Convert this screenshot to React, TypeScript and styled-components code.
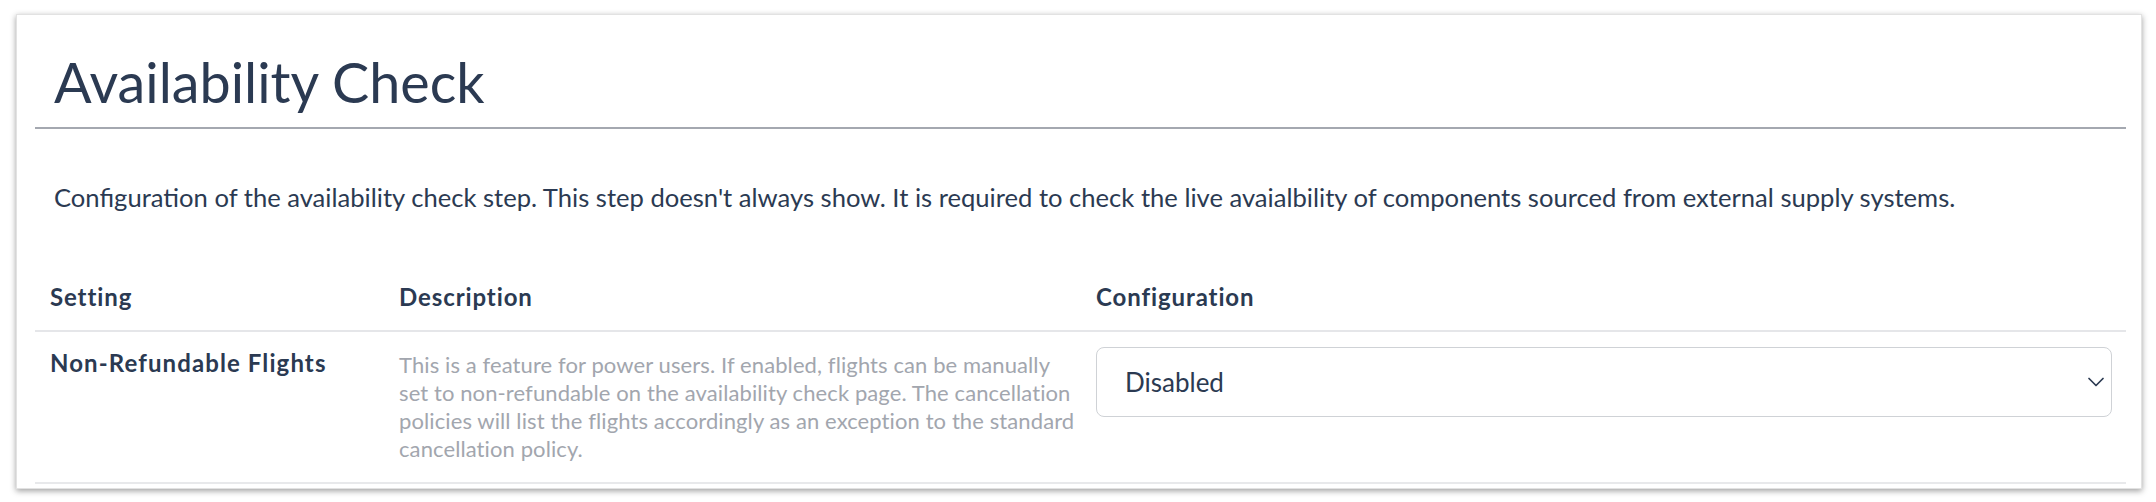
import React from "react";
import styled, { createGlobalStyle } from "styled-components";
import { ChevronDown } from "lucide-react";

const GlobalStyle = createGlobalStyle`
  *, *::before, *::after {
    box-sizing: border-box;
  }

  body {
    margin: 0;
    background: #fff;
    font-family: Lato, "Noto Sans", sans-serif;
    color: #2b3a52;
  }
`;

const Page = styled.div`
  padding: 14px 14px 14px 16px;
`;

const Card = styled.section`
  background: #fff;
  border: 1px solid #e2e2e2;
  box-shadow: 0 2px 6px rgba(0, 0, 0, 0.38);
  padding: 34px 15px 4px 18px;
`;

const Title = styled.h1`
  margin: 0;
  padding: 0 0 13px 19px;
  font-size: 55.7px;
  line-height: 65px;
  font-weight: 400;
  color: #2b3a52;
  border-bottom: 2px solid #a4a8b0;
`;

const Intro = styled.p`
  margin: 53px 0 59px;
  padding-left: 19px;
  font-size: 25.6px;
  line-height: 30px;
  color: #2b3a52;
`;

const Table = styled.table`
  width: 100%;
  border-collapse: collapse;
  table-layout: fixed;
`;

const Th = styled.th<{ $width?: number }>`
  width: ${(p) => (p.$width ? `${p.$width}px` : "auto")};
  text-align: left;
  padding: 11px 15px 18px;
  font-size: 24px;
  line-height: 30px;
  font-weight: 700;
  letter-spacing: 0.9px;
  color: #2b3a52;
  border-bottom: 2px solid #e5e6e9;
`;

const Td = styled.td<{ $muted?: boolean }>`
  vertical-align: top;
  padding: ${(p) => (p.$muted ? "19px 6px 19px 15px" : "15px 14px 15px 15px")};
  font-size: ${(p) => (p.$muted ? "22px" : "24px")};
  line-height: ${(p) => (p.$muted ? "28px" : "30px")};
  letter-spacing: ${(p) => (p.$muted ? "0.1px" : "normal")};
  color: ${(p) => (p.$muted ? "#a2a6ae" : "#2b3a52")};
  border-bottom: 2px solid #e8e9eb;
`;

const SettingName = styled.span`
  display: block;
  padding-top: 1px;
  font-weight: 700;
  letter-spacing: 1.1px;
  white-space: nowrap;
`;

const SelectWrap = styled.div`
  position: relative;
`;

const Select = styled.select`
  appearance: none;
  width: 100%;
  height: 70px;
  padding: 0 60px 0 28px;
  border: 1px solid #cfd2d6;
  border-radius: 8px;
  background: #fff;
  font-family: inherit;
  font-size: 26px;
  color: #2b3a52;
  outline: none;
`;

const Chevron = styled(ChevronDown)`
  position: absolute;
  right: 2px;
  top: 50%;
  transform: translateY(-50%);
  color: #2b3a52;
  pointer-events: none;
`;

export default function App() {
  return (
    <>
      <GlobalStyle />
      <Page>
        <Card>
          <Title>Availability Check</Title>
          <Intro>
            Configuration of the availability check step. This step doesn't always show. It is required to check the
            live avaialbility of components sourced from external supply systems.
          </Intro>
          <Table>
            <thead>
              <tr>
                <Th $width={349}>Setting</Th>
                <Th $width={697}>Description</Th>
                <Th>Configuration</Th>
              </tr>
            </thead>
            <tbody>
              <tr>
                <Td>
                  <SettingName>Non-Refundable Flights</SettingName>
                </Td>
                <Td $muted>
                  This is a feature for power users. If enabled, flights can be manually
                  <br />
                  set to non-refundable on the availability check page. The cancellation
                  <br />
                  policies will list the flights accordingly as an exception to the standard
                  <br />
                  cancellation policy.
                </Td>
                <Td>
                  <SelectWrap>
                    <Select defaultValue="disabled">
                      <option value="disabled">Disabled</option>
                      <option value="enabled">Enabled</option>
                    </Select>
                    <Chevron size={28} strokeWidth={1.5} />
                  </SelectWrap>
                </Td>
              </tr>
            </tbody>
          </Table>
        </Card>
      </Page>
    </>
  );
}
